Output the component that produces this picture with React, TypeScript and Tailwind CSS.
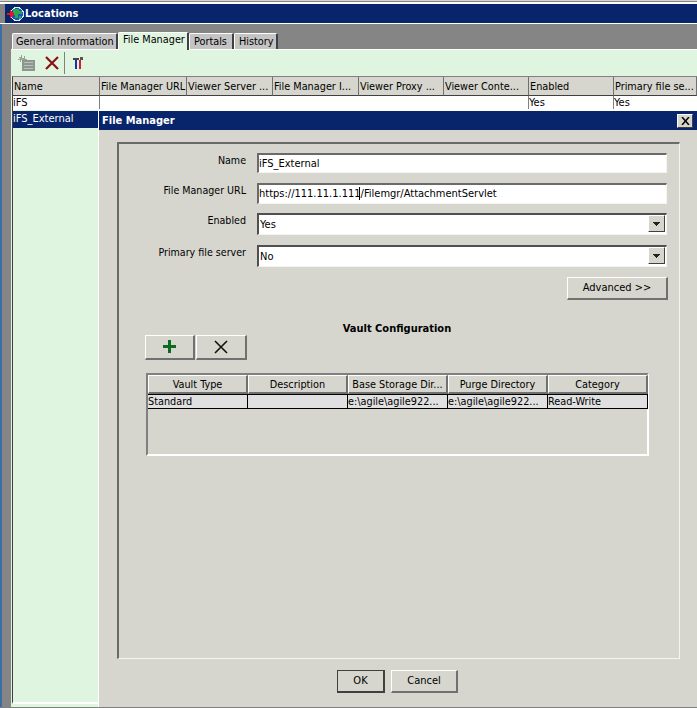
const font = { fontFamily: '"DejaVu Sans Condensed", "Noto Sans", sans-serif' };

function Globe() {
  return (
    <svg width="17" height="16" viewBox="0 0 17 16" shapeRendering="crispEdges">
      <circle cx="10" cy="8" r="6.5" fill="#1b52c4" stroke="#dfe8f5" strokeWidth="1" />
      <path d="M6 3h6v2h3v3h-4v4H8V9H6zM12 10h2v3h-2z" fill="#2aa84a" />
      <path d="M0 7h3V4h1v1h1v1h1v1h1v2H6v1H5v1H4v1H3V9H0z" fill="#e8102a" />
    </svg>
  );
}

function NewDocIcon() {
  return (
    <svg width="18" height="16" viewBox="0 0 18 16" shapeRendering="crispEdges">
      <path d="M4 5h13v11H4z" fill="#8f968f" />
      <path d="M6 7h9v1H6zM6 10h9v1H6zM6 13h9v1H6z" fill="#b9c2b9" />
      <path d="M3 0h1v3h2V1h1v3h2v1H3v2H2V5H0V4h2V3H1V2h2z" fill="#9aa39a" />
    </svg>
  );
}

function RedX() {
  return (
    <svg width="14" height="14" viewBox="0 0 14 14">
      <path d="M1 1l12 12M13 1L1 13" stroke="#8a1414" strokeWidth="2.2" fill="none" />
    </svg>
  );
}

function ToolsIcon() {
  return (
    <svg width="11" height="12" viewBox="0 0 11 12" shapeRendering="crispEdges">
      <path d="M0 1h6v2H0z" fill="#444" />
      <path d="M2 3h2v9H2z" fill="#1c2fb0" />
      <path d="M6 3h2v9H6z" fill="#d0202a" />
      <path d="M7 0h3v3H7z" fill="#555" />
    </svg>
  );
}

function Tab({ label, active, w, pad }: { label: string; active?: boolean; w: string; pad: string }) {
  return active ? (
    <div className={`${w} ${pad} h-[18px] -mb-px z-10 bg-[#dff5df] border-t border-l border-white border-r-2 border-r-[#404040] rounded-t-[2px] text-[10.8px] leading-[14px] text-black whitespace-nowrap`}>
      {label}
    </div>
  ) : (
    <div className={`${w} ${pad} h-[16px] bg-[#c4c4c4] border-t border-l border-white border-r-2 border-r-[#404040] rounded-t-[2px] text-[10.8px] leading-[16px] text-black whitespace-nowrap`}>
      {label}
    </div>
  );
}

function HeadCell({ label, w }: { label: string; w: string }) {
  return (
    <div className={`${w} h-full shrink-0 border-r border-r-[#707070] border-b border-b-[#404040] pl-[1px] text-[10.8px] leading-[20px] whitespace-nowrap text-black`}>
      {label}
    </div>
  );
}

function Field({ label, children, h, mb }: { label: string; children: React.ReactNode; h: string; mb: string }) {
  return (
    <div className={`flex items-start ${h} ${mb}`}>
      <div className="w-[127px] text-right text-[10.6px] leading-[15px] text-black whitespace-nowrap">{label}</div>
      <div className="ml-[11px] w-[410px] h-full">{children}</div>
    </div>
  );
}

function TextBox({ children }: { children: React.ReactNode }) {
  return (
    <div className="h-full bg-white border-t-2 border-l-2 border-t-[#6a6a6a] border-l-[#6a6a6a] border-r border-b border-r-[#f4f4f0] border-b-[#f4f4f0] text-[11px] leading-[18px] text-black whitespace-nowrap">
      {children}
    </div>
  );
}

function Combo({ value }: { value: string }) {
  return (
    <div className="h-full bg-white border-t-2 border-l-2 border-t-[#505050] border-l-[#505050] border-r border-b border-r-[#f4f4f0] border-b-[#f4f4f0] flex justify-between text-[11px] leading-[20px] text-black pl-[1px]">
      <span>{value}</span>
      <div className="w-[17px] h-[17px] mr-[1px] bg-[#d6d6ce] border border-t-white border-l-white border-r-[#404040] border-b-[#404040] flex items-center justify-center">
        <svg width="7" height="4" viewBox="0 0 7 4" shapeRendering="crispEdges"><path d="M0 0h7L3.5 4z" fill="#222" /></svg>
      </div>
    </div>
  );
}

function RaisedBtn({ children, w, h, dark }: { children: React.ReactNode; w: string; h: string; dark?: boolean }) {
  return (
    <div className={`${w} ${h} bg-[#d6d6ce] border-r-2 border-b-2 ${dark ? "border-t border-l border-t-[#404040] border-l-[#404040] border-r-[#404040] border-b-[#404040]" : "border-t border-l border-t-white border-l-white border-r-[#707070] border-b-[#707070]"} flex items-center justify-center text-[11px] text-black`}>
      {children}
    </div>
  );
}

function VaultHead({ label }: { label: string }) {
  return (
    <div className="w-[100px] h-[19px] shrink-0 bg-[#d6d6ce] border-t border-l border-t-white border-l-white border-r-2 border-b-2 border-r-[#707070] border-b-[#707070] text-center text-[10.8px] leading-[18px] text-black whitespace-nowrap">
      {label}
    </div>
  );
}

function VaultCell({ label }: { label: string }) {
  return (
    <div className="w-[100px] h-full shrink-0 border-r border-r-black text-[10.8px] leading-[14px] text-black whitespace-nowrap">
      {label}
    </div>
  );
}

export default function App() {
  return (
    <div className="relative w-[697px] h-[708px] overflow-hidden bg-[#858585] flex flex-col" style={font}>
      <div className="h-[1px] bg-[#d6d6ce] shrink-0" />
      <div className="h-[1px] bg-[#858585] shrink-0" />
      <div className="h-[2px] bg-white shrink-0" />
      {/* Title */}
      <div className="ml-[5px] h-[19px] pt-[1px] bg-[#08246b] flex items-center gap-[1px] shrink-0 pl-[2px]">
        <Globe />
        <span className="text-white font-bold text-[11px] leading-[14px]">Locations</span>
      </div>
      <div className="h-[1px] bg-white shrink-0" />
      {/* Main */}
      <div className="flex-1 flex min-h-0 border-l-2 border-l-[#3a6ea5]">
        <div className="flex-1 flex flex-col pl-[9px] min-w-0">
          {/* Tabs */}
          <div className="flex items-end gap-0 pl-[1px] pt-[8px] h-[25px] shrink-0">
            <Tab label="General Information" w="w-[106px]" pad="pl-[3px]" />
            <Tab label="File Manager" active w="w-[71px]" pad="pl-[4px]" />
            <Tab label="Portals" w="w-[45px]" pad="pl-[4px]" />
            <Tab label="History" w="w-[44px]" pad="pl-[4px]" />
          </div>
          {/* Panel */}
          <div className="flex-1 flex flex-col bg-[#dff5df] border-t border-t-white min-h-0">
            <div className="h-[26px] flex items-center shrink-0 pl-[7px]">
              <NewDocIcon />
              <div className="ml-[9px]"><RedX /></div>
              <div className="ml-[5px] w-[1px] h-[22px] bg-[#808080]" />
              <div className="ml-[8px]"><ToolsIcon /></div>
            </div>
            <div className="flex-1 flex flex-col pl-[1px] min-h-0">
              <div className="border-t border-l border-t-[#808080] border-l-[#404040] flex-1 flex flex-col border-b-2 border-b-white min-h-0 mb-[3px]">
                <div className="h-[19px] flex bg-[#d6d6ce] shrink-0">
                  <HeadCell label="Name" w="w-[87px]" />
                  <HeadCell label="File Manager URL" w="w-[87px]" />
                  <HeadCell label="Viewer Server ..." w="w-[86px]" />
                  <HeadCell label="File Manager I..." w="w-[86px]" />
                  <HeadCell label="Viewer Proxy ..." w="w-[85px]" />
                  <HeadCell label="Viewer Conte..." w="w-[85px]" />
                  <HeadCell label="Enabled" w="w-[85px]" />
                  <HeadCell label="Primary file se..." w="w-[83px]" />
                </div>
                <div className="h-[14px] flex bg-white shrink-0 text-[11px] leading-[13px] text-black">
                  <div className="w-[87px] shrink-0 border-r border-r-[#808080]">iFS</div>
                  <div className="w-[429px] shrink-0 border-r border-r-[#808080]" />
                  <div className="w-[85px] shrink-0 border-r border-r-[#808080]">Yes</div>
                  <div className="w-[83px] shrink-0">Yes</div>
                </div>
                <div className="w-[86px] h-[17px] mt-[1px] bg-[#08246b] text-white text-[11px] leading-[16px]">iFS_External</div>
              </div>
            </div>
          </div>
        </div>
      </div>
      <div className="h-[1px] bg-[#808080] shrink-0" />

      {/* Dialog window over the content */}
      <div className="absolute left-[98px] top-[109px] w-[599px] h-[598px] bg-[#d6d6ce] border-t-2 border-l border-t-white border-l-white flex flex-col">
        <div className="h-[19px] bg-[#08246b] shrink-0 flex items-center justify-between pl-[3px] pr-[4px]">
          <span className="text-white font-bold text-[11px] leading-[14px]">File Manager</span>
          <div className="w-[16px] h-[14px] bg-[#d6d6ce] border border-t-white border-l-white border-r-[#404040] border-b-[#404040] flex items-center justify-center">
            <svg width="9" height="8" viewBox="0 0 9 8"><path d="M1 0l7 8M8 0L1 8" stroke="#000" strokeWidth="1.5" fill="none" /></svg>
          </div>
        </div>
        <div className="flex-1 flex flex-col pt-[12px] pl-[18px] pr-[17px] min-h-0">
          {/* Group */}
          <div className="h-[517px] border-t-2 border-l-2 border-t-[#6a6a6a] border-l-[#6a6a6a] border-r border-b border-r-[#f4f4f0] border-b-[#f4f4f0] flex flex-col pt-[9px] shrink-0">
            <Field label="Name" h="h-[20px]" mb="mb-[10px]"><TextBox>iFS_External</TextBox></Field>
            <Field label="File Manager URL" h="h-[21px]" mb="mb-[9px]">
              <TextBox>
                https://111.11.1.111
                <span className="relative">
                  <span className="absolute -left-[2px] top-[0px] w-[1px] h-[13px] bg-black" />
                </span>
                /Filemgr/AttachmentServlet
              </TextBox>
            </Field>
            <Field label="Enabled" h="h-[22px]" mb="mb-[10px]"><Combo value="Yes" /></Field>
            <Field label="Primary file server" h="h-[22px]" mb="mb-[10px]"><Combo value="No" /></Field>
            <div className="flex justify-end pr-[11px] shrink-0">
              <RaisedBtn w="w-[101px]" h="h-[23px]"><span className="pt-[1px]">Advanced &gt;&gt;</span></RaisedBtn>
            </div>
            <div className="mt-[22px] text-center pr-[4px] font-bold text-[11px] leading-[14px] text-black shrink-0">Vault Configuration</div>
            <div className="flex pl-[26px] -mt-[1px] gap-[1px] shrink-0">
              <RaisedBtn w="w-[50px]" h="h-[25px]">
                <svg width="14" height="14" viewBox="0 0 14 14" shapeRendering="crispEdges"><path d="M5 0h3v5h5v3H8v5H5V8H0V5h5z" fill="#0b6b22" /></svg>
              </RaisedBtn>
              <RaisedBtn w="w-[51px]" h="h-[25px]">
                <svg width="14" height="14" viewBox="0 0 14 14"><path d="M1 1l12 12M13 1L1 13" stroke="#111" strokeWidth="1.6" fill="none" /></svg>
              </RaisedBtn>
            </div>
            <div className="ml-[27px] mt-[13px] w-[503px] h-[83px] border-t-2 border-l-2 border-t-[#808080] border-l-[#808080] border-r-2 border-b-2 border-r-white border-b-white shrink-0">
              <div className="flex">
                <VaultHead label="Vault Type" />
                <VaultHead label="Description" />
                <VaultHead label="Base Storage Dir..." />
                <VaultHead label="Purge Directory" />
                <VaultHead label="Category" />
              </div>
              <div className="flex h-[15px] w-[500px] bg-[#e0e0e0] border-t border-b border-t-black border-b-black">
                <VaultCell label="Standard" />
                <VaultCell label="" />
                <VaultCell label="e:\agile\agile922..." />
                <VaultCell label="e:\agile\agile922..." />
                <VaultCell label="Read-Write" />
              </div>
            </div>
          </div>
          {/* Bottom buttons */}
          <div className="flex justify-start pl-[220px] gap-[6px] mt-[11px] shrink-0">
            <RaisedBtn w="w-[48px]" h="h-[23px]" dark>OK</RaisedBtn>
            <RaisedBtn w="w-[67px]" h="h-[23px]">Cancel</RaisedBtn>
          </div>
        </div>
      </div>
    </div>
  );
}
